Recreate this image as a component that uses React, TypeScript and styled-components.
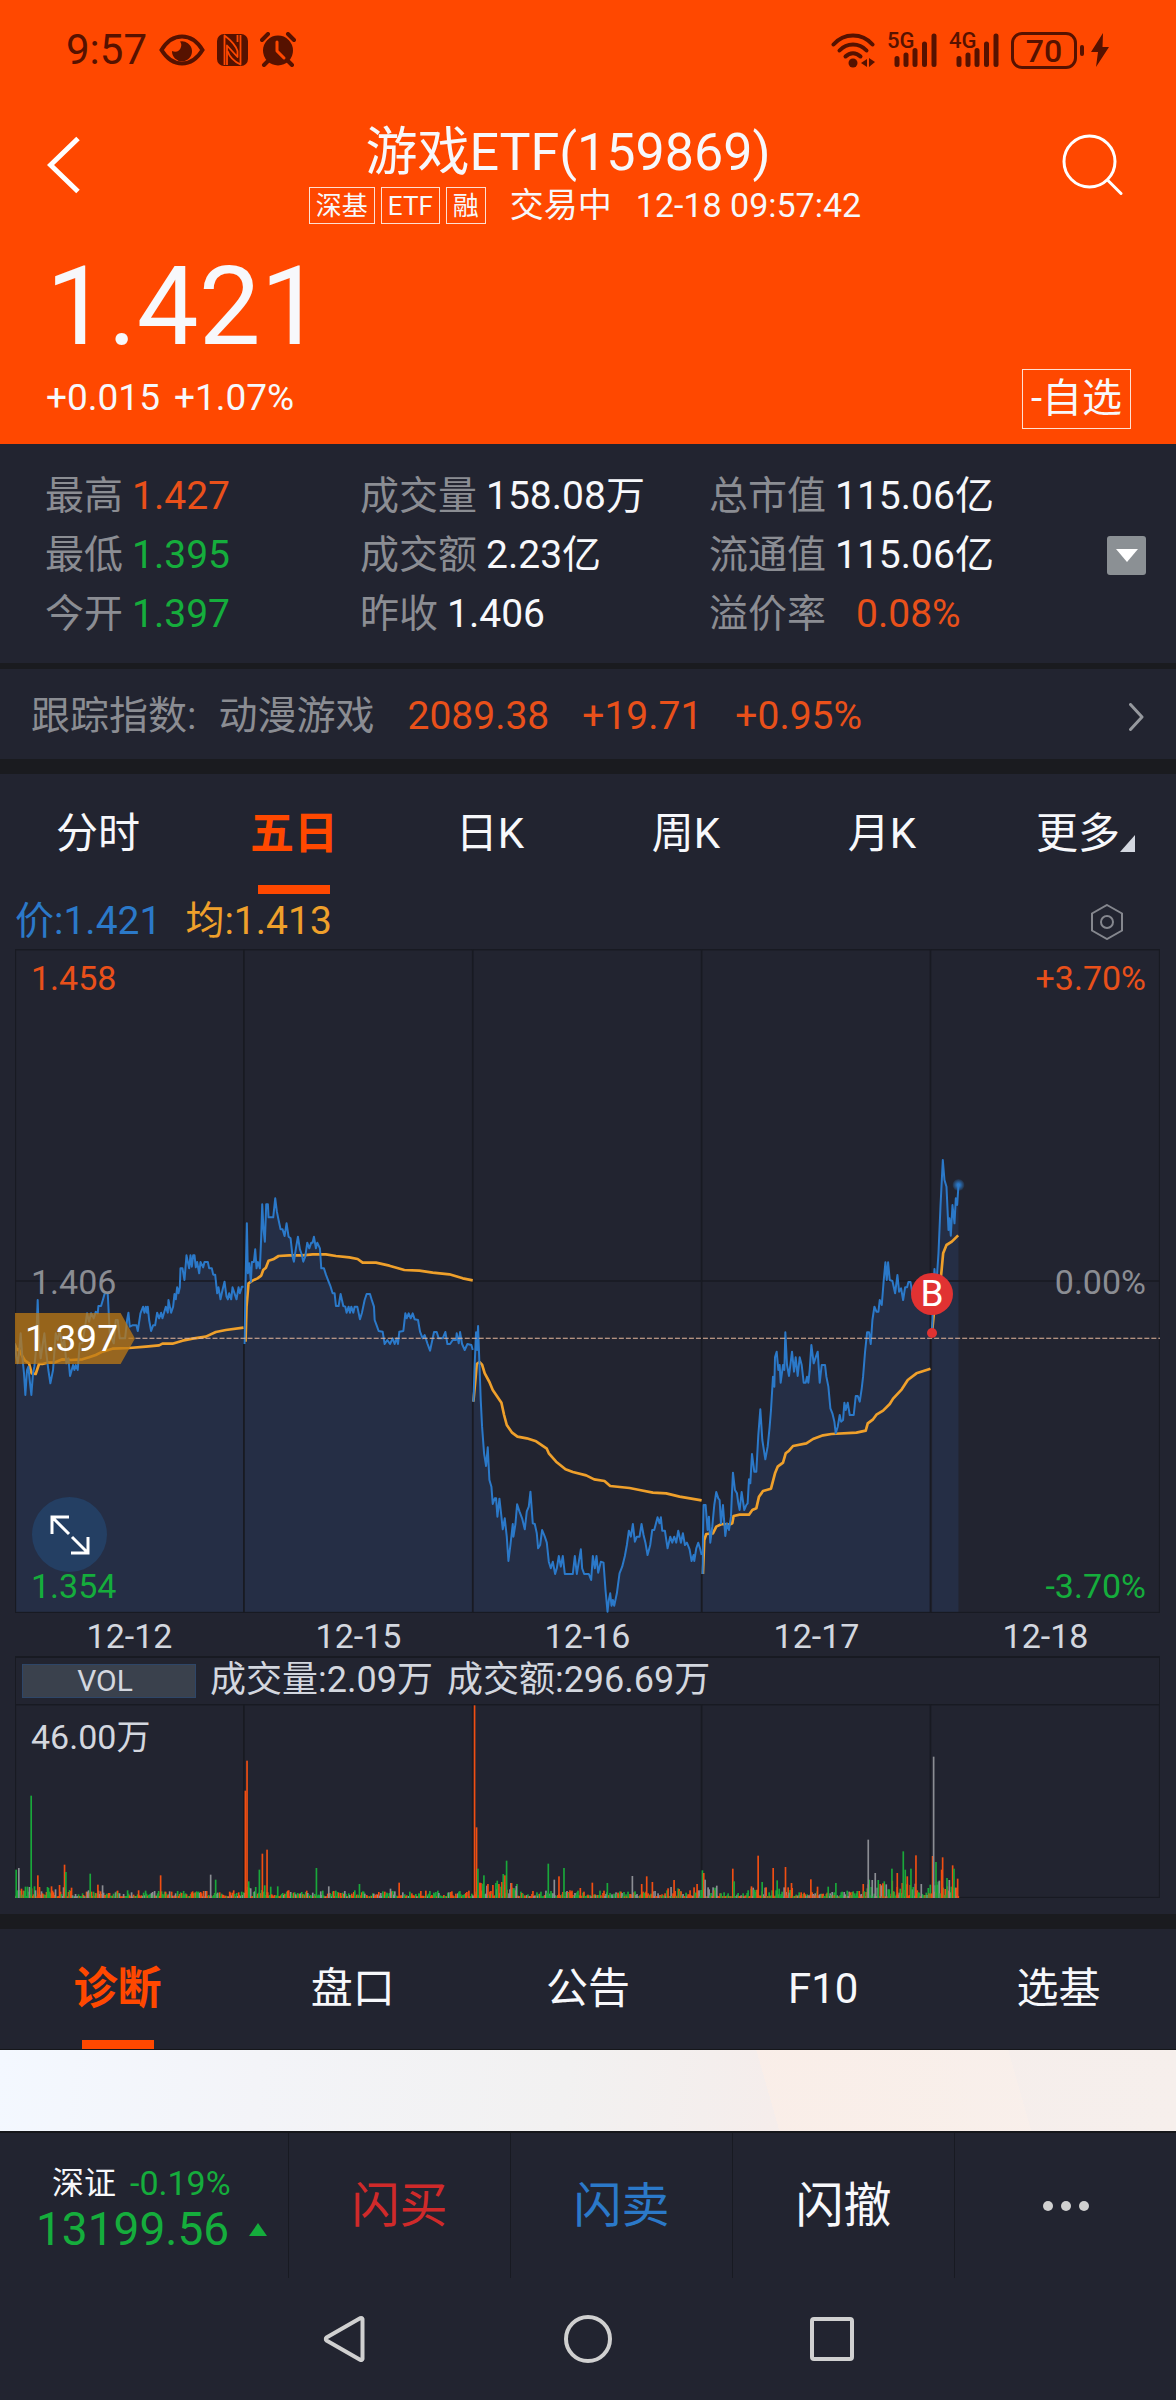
import React from "react";
import styled, { createGlobalStyle } from "styled-components";

const c = {
  brand: "#ff4800",
  panel: "#222430",
  gap: "#1a1b1f",
  grid: "#181a22",
  rise: "#e9501a",
  fall: "#15ad3c",
  muted: "#8b8d93",
  text: "#f7f8fb",
  soft: "#d3d7df",
  price: "#2b79c9",
  avg: "#efa02b",
  statusInk: "#561200",
};

const GlobalStyle = createGlobalStyle`
  * { box-sizing: border-box; }
  body {
    margin: 0;
    background: ${c.panel};
    color: ${c.text};
    font-family: Roboto, "Noto Sans CJK SC", sans-serif;
    font-size: 39px;
    line-height: 1.2;
  }
  button { border: 0; padding: 0; background: none; color: inherit; font: inherit; cursor: pointer; }
  a { color: inherit; text-decoration: none; }
  dl, dt, dd, h1, p { margin: 0; font-weight: 400; }
  svg { display: block; flex: none; }
`;

const Page = styled.div`
  display: flex;
  flex-direction: column;
  min-height: 100vh;
`;

/* ---------- header ---------- */

const Header = styled.header`
  background: ${c.brand};
`;

const StatusBar = styled.div`
  display: flex;
  justify-content: space-between;
  align-items: center;
  height: 100px;
  padding: 0 67px 0 66px;
  color: ${c.statusInk};
`;

const StatusGroup = styled.div`
  display: flex;
  align-items: center;
  gap: 12px;
`;

const Clock = styled.span`
  font-size: 42px;
`;

const SignalBox = styled.span`
  position: relative;
`;

const SignalLabel = styled.span`
  position: absolute;
  left: 0;
  top: -4px;
  font-size: 22px;
  font-weight: 500;
  line-height: 24px;
`;

const BatteryBox = styled.span`
  display: flex;
  align-items: center;
`;

const BatteryLevel = styled.span`
  width: 66px;
  height: 37px;
  border: 3px solid currentColor;
  border-radius: 11px;
  font-size: 32px;
  font-weight: 500;
  line-height: 32px;
  text-align: center;
`;

const BatteryNub = styled.span`
  width: 4px;
  height: 11px;
  margin: 0 7px 0 3px;
  border-radius: 2px;
  background: currentColor;
`;

const TopBar = styled.div`
  display: grid;
  grid-template-columns: 80px 1fr 80px;
  align-items: center;
  height: 129px;
  padding: 0 53px 0 47px;
`;

const IconButton = styled.button<{ $end?: boolean }>`
  display: flex;
  justify-content: ${(p) => (p.$end ? "flex-end" : "flex-start")};
  align-items: center;
  height: 80px;
`;

const TitleBlock = styled.div`
  display: flex;
  flex-direction: column;
  align-items: center;
  padding-top: 22px;
`;

const Title = styled.h1`
  padding-right: 34px;
  font-size: 52px;
  line-height: 60px;
  white-space: nowrap;
`;

const SubLine = styled.div`
  display: flex;
  align-items: center;
  gap: 24px;
  height: 46px;
  font-size: 34px;
  white-space: nowrap;
`;

const Tags = styled.div`
  display: flex;
  gap: 6px;
`;

const Tag = styled.span`
  height: 37px;
  padding: 0 6px;
  border: 1px solid #ffe0d2;
  font-size: 26px;
  line-height: 36px;
`;

const PriceRow = styled.div`
  display: flex;
  justify-content: space-between;
  align-items: flex-end;
  padding: 14px 45px 15px 46px;
`;

const LastPrice = styled.p`
  font-size: 110px;
  line-height: 128px;
`;

const Change = styled.p`
  display: flex;
  gap: 14px;
  height: 58px;
  font-size: 37px;
  line-height: 54px;
`;

const WatchButton = styled.button`
  height: 60px;
  padding: 0 8px;
  border: 1px solid #ffe0d2;
  font-size: 40px;
  line-height: 58px;
`;

/* ---------- quote stats ---------- */

const Stats = styled.section`
  display: flex;
  align-items: center;
  padding: 23px 30px 19px 45px;
`;

const StatGrid = styled.dl`
  flex: 1;
  display: grid;
  grid-template-columns: 315fr 349fr 398fr;
  line-height: 59px;
  white-space: nowrap;
`;

const Stat = styled.div<{ $wide?: boolean }>`
  display: flex;
  gap: ${(p) => (p.$wide ? 30 : 9)}px;
`;

const StatName = styled.dt`
  color: ${c.muted};
`;

const StatValue = styled.dd<{ $color: string }>`
  color: ${(p) => p.$color};
`;

const MoreStats = styled.button`
  display: flex;
  align-items: center;
  justify-content: center;
  width: 39px;
  height: 39px;
  border-radius: 3px;
  background: #8b9094;
`;

const Divider = styled.div<{ $size: number }>`
  height: ${(p) => p.$size}px;
  background: ${c.gap};
`;

const IndexLink = styled.a`
  display: flex;
  align-items: center;
  gap: 33px;
  height: 90px;
  padding: 5px 32px 0 31px;
  color: ${c.rise};
  white-space: nowrap;
`;

const IndexName = styled.span`
  display: flex;
  gap: 22px;
  color: ${c.muted};
`;

const IndexArrow = styled.span`
  margin-left: auto;
`;

/* ---------- tabs ---------- */

const Tabs = styled.nav<{ $count: number }>`
  display: grid;
  grid-template-columns: repeat(${(p) => p.$count}, 1fr);
  height: 120px;
`;

const Tab = styled.button<{ $active?: boolean }>`
  position: relative;
  color: ${(p) => (p.$active ? c.brand : c.text)};
  font-size: ${(p) => (p.$active ? 44 : 42)}px;
  font-weight: ${(p) => (p.$active ? 700 : 400)};
  &::after {
    content: "";
    display: ${(p) => (p.$active ? "block" : "none")};
    position: absolute;
    left: calc(50% - 36px);
    bottom: 0;
    width: 72px;
    height: 9px;
    background: ${c.brand};
  }
`;

const TabText = styled.span`
  position: relative;
`;

const Corner = styled.svg`
  position: absolute;
  left: 100%;
  bottom: 6px;
`;

/* ---------- charts ---------- */

const ChartInfo = styled.div`
  display: flex;
  align-items: center;
  gap: 24px;
  height: 55px;
  padding: 0 53px 0 15px;
`;

const Legend = styled.span<{ $color: string }>`
  color: ${(p) => p.$color};
`;

const Settings = styled.button`
  margin-left: auto;
`;

const Charts = styled.section`
  padding: 0 16px 16px 15px;
`;

const PriceChart = styled.div`
  position: relative;
  height: 664px;
`;

const Plot = styled.svg`
  width: 100%;
  height: 100%;
`;

const AxisLabel = styled.span<{ $color: string; $top: number; $right?: boolean }>`
  position: absolute;
  top: ${(p) => p.$top}px;
  ${(p) => (p.$right ? "right: 14px" : "left: 16px")};
  color: ${(p) => p.$color};
  font-size: 34px;
  line-height: 40px;
`;

const OpenTag = styled.span`
  position: absolute;
  left: 0;
  top: 364px;
  width: 120px;
  height: 51px;
  padding-left: 10px;
  background: rgba(190, 121, 20, 0.75);
  clip-path: polygon(0 0, 88% 0, 100% 50%, 88% 100%, 0 100%);
  color: #fff;
  font-size: 37px;
  line-height: 52px;
`;

const ExpandButton = styled.button`
  position: absolute;
  left: 17px;
  top: 548px;
  display: flex;
  align-items: center;
  justify-content: center;
  width: 75px;
  height: 75px;
  border-radius: 50%;
  background: #243f63;
`;

const BuyMark = styled.span`
  position: absolute;
  left: calc(80% - 20px);
  top: 324px;
  width: 42px;
  height: 42px;
  border-radius: 50%;
  background: #e13232;
  color: #fff;
  font-size: 37px;
  line-height: 42px;
  text-align: center;
  &::after {
    content: "";
    position: absolute;
    left: 16px;
    top: 55px;
    width: 10px;
    height: 10px;
    border-radius: 50%;
    background: #e13232;
  }
`;

const Dates = styled.div`
  display: grid;
  grid-template-columns: repeat(5, 1fr);
  height: 43px;
  color: ${c.soft};
  font-size: 34px;
  line-height: 46px;
  text-align: center;
`;

const VolumeHead = styled.div`
  display: flex;
  align-items: center;
  gap: 14px;
  height: 48px;
  padding: 0 6px;
  border: 2px solid ${c.grid};
  border-width: 2px 1px 0;
  color: ${c.soft};
  font-size: 36px;
  white-space: nowrap;
`;

const VolumeKind = styled.button`
  width: 174px;
  height: 34px;
  padding-right: 8px;
  border: 1px solid #2e4668;
  background: #3a414d;
  font-size: 30px;
  line-height: 32px;
`;

const VolumeChart = styled.div`
  position: relative;
  height: 194px;
`;

/* ---------- bottom ---------- */

const Banner = styled.div`
  flex: 1;
  min-height: 84px;
  border: solid #15161a;
  border-width: 1px 0 2px;
  background:
    linear-gradient(74deg, transparent 65%, rgba(250, 238, 232, 0.9) 65%, rgba(250, 240, 234, 0.6) 86%, transparent 86%),
    linear-gradient(98deg, #f3f8ff 0%, #f3f4f8 22%, #f2f1f1 48%, #f5edeb 66%, #f6efec 100%);
`;

const TradeBar = styled.div`
  display: grid;
  grid-template-columns: 288fr 222fr 222fr 222fr 222fr;
  height: 145px;
`;

const MarketButton = styled.button`
  display: flex;
  flex-direction: column;
  justify-content: center;
  padding: 3px 0 0 36px;
  color: ${c.fall};
`;

const MarketTop = styled.span`
  display: flex;
  gap: 14px;
  padding-left: 16px;
  font-size: 32px;
  line-height: 44px;
`;

const MarketName = styled.span`
  color: ${c.text};
`;

const MarketChange = styled.span`
  font-size: 34px;
`;

const MarketValue = styled.span`
  display: flex;
  align-items: center;
  gap: 20px;
  font-size: 46px;
  line-height: 48px;
`;

const TradeButton = styled.button<{ $color: string }>`
  display: flex;
  align-items: center;
  justify-content: center;
  border-left: 1px solid ${c.grid};
  color: ${(p) => p.$color};
  font-size: 48px;
`;

const SystemNav = styled.nav`
  display: flex;
  justify-content: center;
  gap: 176px;
  height: 122px;
`;

const NavButton = styled.button`
  display: flex;
  align-items: center;
  justify-content: center;
  width: 68px;
`;

/* ---------- data ---------- */

type Session = { shift: [number, number]; price: string; avg: string };

const sessions: Session[] = [
  {
    shift: [-48, 573],
    price:
      "48,610 52,650 56,670 60,640 65,580 70,650 75,700 79,765 84,690 88,680 92,720 97,765 102,700 106,680 110,640 116,480 120,600 125,655 130,620 136,580 142,640 148,690 154,730 162,690 170,580 176,600 182,570 190,620 196,600 202,670 208,655 213,708 218,690 222,675 226,690 230,675 236,690 242,610 250,610 258,560 264,520 270,545 276,520 284,535 290,515 296,520 298,498 306,498 312,478 317,460 326,460 332,580 338,595 344,610 350,540 356,540 362,595 378,595 384,540 388,518 392,560 400,556 412,556 416,573 424,520 432,500 436,518 440,500 444,518 446,500 450,540 456,573 462,556 468,556 474,518 480,535 486,518 490,535 500,500 506,518 508,480 512,500 516,518 522,500 526,462 530,478 534,442 538,460 542,442 544,385 550,385 556,420 562,346 570,385 574,346 578,380 582,346 586,346 590,382 594,366 600,400 604,366 612,382 616,366 626,366 630,385 638,385 642,404 648,404 654,460 658,442 664,478 670,450 676,425 682,470 686,478 690,460 696,478 700,442 706,460 712,478 718,442 722,460 728,440 733,440",
    avg: "48,615 54,630 60,628 68,645 78,662 90,670 98,700 110,702 120,672 130,672 145,668 165,668 190,658 215,660 250,658 270,652 290,645 310,635 340,626 390,624 440,620 480,616 490,611 520,611 550,602 580,596 620,590 650,576 680,570 733,563",
  },
  {
    shift: [-48, 573],
    price:
      "736,612 739,430 743,250 746,400 750,370 755,425 758,366 764,366 768,328 772,385 776,366 782,385 786,290 789,193 793,270 797,305 801,193 806,193 808,232 822,232 828,175 833,215 838,240 844,268 850,268 856,288 862,250 868,290 874,295 880,350 884,365 890,325 896,290 902,328 908,345 912,365 918,350 924,308 930,325 936,308 940,308 944,290 950,325 954,308 962,325 966,385 974,385 980,404 988,425 994,440 1000,460 1006,460 1010,498 1018,498 1024,462 1032,498 1038,500 1042,518 1048,500 1052,518 1056,500 1062,518 1066,500 1074,500 1082,538 1088,518 1096,480 1102,462 1112,462 1118,482 1124,500 1126,540 1132,556 1138,573 1150,575 1156,612 1164,600 1172,612 1180,595 1186,612 1192,595 1196,612 1200,575 1212,573 1218,520 1222,535 1228,520 1234,535 1240,520 1246,538 1256,540 1262,575 1270,595 1276,585 1284,610 1292,632 1300,595 1304,576 1312,576 1318,595 1324,595 1330,595 1338,576 1344,612 1352,612 1360,600 1370,600 1372,580 1378,610 1382,576 1388,612 1396,630 1404,612 1416,615 1420,630",
    avg: "739,605 742,500 748,430 760,422 775,415 786,407 792,390 800,383 808,362 822,358 838,348 870,346 910,346 940,343 980,343 1010,348 1050,352 1075,357 1090,368 1130,368 1170,377 1215,390 1260,392 1300,398 1350,403 1390,415 1420,421",
  },
  {
    shift: [1272, 1053],
    price:
      "102,305 106,190 110,97 113,150 116,78 120,190 124,300 128,380 134,460 140,498 145,442 150,540 156,560 160,612 166,595 170,595 174,650 180,596 186,650 190,688 196,655 202,710 207,783 213,735 220,672 222,710 228,672 233,613 240,634 248,655 256,688 262,634 268,620 273,575 280,670 286,672 292,700 296,745 302,735 308,690 316,710 322,728 328,785 334,805 340,785 347,822 352,805 358,768 364,800 370,768 376,822 400,822 406,768 412,822 418,785 424,748 428,805 434,822 448,822 455,840 460,768 466,805 471,768 476,818 484,785 492,788 498,870 504,935 508,900 512,880 516,917 520,900 524,917 532,880 540,820 548,800 556,768 562,735 568,692 574,710 580,672 586,725 592,710 600,710 606,672 612,705 618,730 624,765 632,735 638,690 644,690 654,652 660,670 664,652 668,692 676,692 684,745 692,710 698,728 704,710 710,728 716,692 724,728 730,700 736,735 742,728 750,748 756,783 762,765 764,783 770,745 776,728 782,748 786,765",
    avg: "102,305 108,240 112,192 120,186 128,194 136,220 150,246 160,270 186,308 194,345 202,375 218,398 234,410 262,415 290,424 322,446 328,460 350,485 378,508 400,516 440,526 464,538 495,543 512,558 570,564 600,570 640,578 680,580 720,590 786,601",
  },
  {
    shift: [2052, 513],
    price:
      "9,1362 10,1250 12,1155 18,1155 24,1230 28,1190 32,1268 38,1220 44,1155 50,1116 56,1135 60,1140 64,1210 70,1155 77,1248 82,1210 88,1230 94,1190 97,1120 100,1058 106,1110 112,1120 116,1150 120,1170 126,1116 134,1170 140,1155 144,1150 148,1078 152,1090 157,1002 164,1055 170,1055 176,945 182,868 188,960 197,1018 204,980 210,920 214,870 220,770 224,800 226,712 231,695 236,750 240,735 243,788 250,735 254,750 257,637 262,735 268,768 277,695 283,755 288,712 294,768 300,712 306,735 312,788 318,788 322,770 326,788 330,750 335,675 342,730 347,715 354,695 360,788 366,735 376,735 380,770 386,800 392,865 398,880 404,905 408,940 414,920 420,885 424,905 430,900 434,848 438,870 444,848 450,885 462,885 468,828 474,828 480,845 486,805 490,770 496,695 502,637 508,637 513,672 518,600 524,560 530,575 536,575 540,540 546,555 552,480 557,427 561,480 565,427 570,480 578,483 586,520 593,465 598,515 604,505 610,540 616,502 622,502 626,486 632,486 638,520 660,500 692,520",
    avg: "10,1362 14,1260 20,1242 40,1240 50,1220 66,1212 90,1214 98,1210 102,1188 120,1184 148,1184 158,1170 170,1165 178,1130 190,1113 214,1106 226,1060 234,1040 250,1028 258,1000 268,992 280,978 320,970 340,957 370,946 395,942 470,938 498,932 504,910 520,898 530,884 550,872 570,852 580,836 606,808 624,780 650,760 692,746",
  },
  {
    shift: [2052, 513],
    price:
      "697,635 700,520 704,447 708,500 712,460 716,400 722,260 729,120 734,180 740,200 746,330 749,295 753,347 758,255 764,310 768,235 772,255 776,195",
    avg: "697,635 706,540 716,500 724,465 730,400 740,375 756,365 775,346",
  },
];

const PLOT_W = 3432;
const PLOT_H = 1992;
const VOL_H = 582;
const dayLines = [686, 1372, 2058, 2744];

const toPoints = (raw: string, [dx, dy]: [number, number]) =>
  raw.split(" ").map((pair) => {
    const [x, y] = pair.split(",").map(Number);
    return [x + dx, y + dy];
  });

const join = (pts: number[][]) => pts.map((p) => p.join(",")).join(" ");

const areaOf = (pts: number[][]) =>
  `${pts[0][0]},${PLOT_H} ${join(pts)} ${pts[pts.length - 1][0]},${PLOT_H}`;

const volColors: Record<string, string> = { r: "#f04e12", g: "#19a83a", n: "#8b8d93" };

const peaks: [number, number, string][] = [
  [3, 85, "g"], [11, 90, "n"], [48, 307, "g"], [68, 68, "r"], [148, 100, "r"], [152, 78, "g"], [225, 73, "g"],
  [248, 40, "r"], [262, 38, "n"], [436, 68, "r"], [586, 70, "n"], [601, 55, "g"], [690, 322, "r"], [695, 412, "r"],
  [700, 50, "g"], [732, 85, "g"], [741, 133, "r"], [755, 145, "r"], [787, 35, "g"], [903, 90, "g"], [940, 35, "n"],
  [1032, 42, "g"], [1125, 28, "n"], [1151, 46, "r"], [1377, 578, "r"], [1383, 212, "r"], [1387, 88, "g"],
  [1405, 68, "g"], [1445, 52, "g"], [1463, 72, "g"], [1468, 68, "r"], [1473, 112, "g"], [1488, 45, "r"],
  [1502, 36, "n"], [1598, 103, "g"], [1616, 55, "n"], [1630, 65, "r"], [1645, 90, "g"], [1694, 30, "r"],
  [1730, 46, "r"], [1775, 45, "g"], [1850, 66, "n"], [1878, 42, "r"], [1893, 65, "r"], [1910, 48, "r"],
  [1975, 54, "r"], [2044, 42, "r"], [2060, 83, "g"], [2064, 75, "r"], [2068, 55, "n"], [2103, 37, "n"],
  [2151, 88, "r"], [2155, 50, "g"], [2207, 35, "r"], [2227, 127, "r"], [2239, 48, "g"], [2272, 90, "r"],
  [2284, 53, "g"], [2309, 93, "r"], [2327, 45, "r"], [2385, 56, "r"], [2405, 34, "r"], [2437, 34, "g"],
  [2460, 45, "g"], [2557, 175, "n"], [2578, 75, "n"], [2601, 44, "r"], [2628, 88, "g"], [2644, 75, "r"],
  [2662, 140, "g"], [2668, 85, "g"], [2674, 65, "r"], [2685, 88, "g"], [2700, 128, "r"], [2716, 42, "n"],
  [2750, 126, "r"], [2753, 424, "n"], [2760, 108, "g"], [2777, 85, "r"], [2780, 122, "r"], [2793, 60, "g"],
  [2810, 98, "r"], [2814, 88, "g"], [2825, 58, "r"],
];

/* Quiet minutes between the peaks: small bars, busier near each open. */
const quiet: [number, number, string][] = (() => {
  let seed = 7;
  const rnd = () => {
    seed = (seed * 16807) % 2147483647;
    return seed / 2147483647;
  };
  const busy = (x: number) => {
    if (x < 170) return 34;
    if (x > 690 && x < 770) return 38;
    if (x > 1380 && x < 1510) return 48;
    if (x > 1950 && x < 2110) return 28;
    if (x > 2190 && x < 2330) return 28;
    if (x > 2540) return 50;
    return 18;
  };
  const out: [number, number, string][] = [];
  for (let x = 1; x < 2828; x += 3) {
    const k = rnd();
    const hue = rnd();
    out.push([x, 5 + Math.round(k * k * busy(x)), hue < 0.42 ? "r" : hue < 0.82 ? "g" : "n"]);
  }
  return out;
})();

const stats: { name: string; value: string; color: string; wide?: boolean }[] = [
  { name: "最高", value: "1.427", color: c.rise },
  { name: "成交量", value: "158.08万", color: c.text },
  { name: "总市值", value: "115.06亿", color: c.text },
  { name: "最低", value: "1.395", color: c.fall },
  { name: "成交额", value: "2.23亿", color: c.text },
  { name: "流通值", value: "115.06亿", color: c.text },
  { name: "今开", value: "1.397", color: c.fall },
  { name: "昨收", value: "1.406", color: c.text },
  { name: "溢价率", value: "0.08%", color: c.rise, wide: true },
];

/* ---------- icons ---------- */

const EyeIcon = () => (
  <svg width="46" height="32" viewBox="0 0 46 32">
    <path d="M2.500 16C8 7 15 2.500 23 2.500S38 7 43.500 16C38 25 31 29.500 23 29.500S8 25 2.500 16Z" fill="none" stroke={c.statusInk} strokeWidth="4" />
    <path d="M21 7.500a10 10 0 1 1-8 9.500c4 2 8 0 9-4 .6-2.200.3-4-1-5.500Z" fill={c.statusInk} />
  </svg>
);

const NfcIcon = () => (
  <svg width="31" height="32" viewBox="0 0 31 32">
    <rect width="31" height="32" rx="7" fill={c.statusInk} />
    <path d="M7.500 31V1.500C12 5 18 9 20.500 17V23L10 11.500V31" fill="none" stroke={c.brand} strokeWidth="1.800" strokeLinejoin="round" />
    <path d="M23.500 1V30.500C18 28 13 24 10.500 17M20.500 1V8" fill="none" stroke={c.brand} strokeWidth="1.800" strokeLinejoin="round" />
  </svg>
);

const AlarmIcon = () => (
  <svg width="36" height="35" viewBox="0 0 36 35">
    <circle cx="18" cy="18.500" r="15" fill={c.statusInk} />
    <path d="M2 8l6-6M34 8l-6-6M8 29l-4 4M28 29l4 4" stroke={c.statusInk} strokeWidth="4" strokeLinecap="round" />
    <path d="M17 10v9l7 7" fill="none" stroke={c.brand} strokeWidth="3" strokeLinecap="round" strokeLinejoin="round" />
  </svg>
);

const WifiIcon = () => (
  <svg width="44" height="35" viewBox="0 0 44 35">
    <g fill="none" stroke={c.statusInk} strokeWidth="4" strokeLinecap="round">
      <path d="M2.500 11.500C13-.5 31-.5 41.500 11.500" />
      <path d="M8.500 17.500c7.500-8 19.500-8 27 0" />
      <path d="M14.500 23.500c4.500-4.500 10.500-4.500 15 0" />
    </g>
    <circle cx="22" cy="30" r="4.500" fill={c.statusInk} />
    <path d="M36 26v8l-6-4ZM38 25v9l6-5Z" fill={c.statusInk} />
  </svg>
);

const Signal = ({ label }: { label: string }) => (
  <SignalBox>
    <SignalLabel>{label}</SignalLabel>
    <svg width="50" height="34" viewBox="0 0 50 34">
      <path d="M10 25.500v6M19 22v9.500M28 17.500v14M37.500 11v20.500M47 3v28.500" stroke={c.statusInk} strokeWidth="5" strokeLinecap="round" />
    </svg>
  </SignalBox>
);

const BoltIcon = () => (
  <svg width="18" height="34" viewBox="0 0 18 34">
    <path d="M12 0L0 19h7L5 34 18 14h-6.500Z" fill={c.statusInk} />
  </svg>
);

const lineTabs = ["分时", "五日", "日K", "周K", "月K", "更多"];
const infoTabs = ["诊断", "盘口", "公告", "F10", "选基"];
const dates = ["12-12", "12-15", "12-16", "12-17", "12-18"];

export default function App() {
  return (
    <>
      <GlobalStyle />
      <Page>
        <Header>
          <StatusBar>
            <StatusGroup>
              <Clock>9:57</Clock>
              <EyeIcon />
              <NfcIcon />
              <AlarmIcon />
            </StatusGroup>
            <StatusGroup>
              <WifiIcon />
              <Signal label="5G" />
              <Signal label="4G" />
              <BatteryBox>
                <BatteryLevel>70</BatteryLevel>
                <BatteryNub />
                <BoltIcon />
              </BatteryBox>
            </StatusGroup>
          </StatusBar>

          <TopBar>
            <IconButton aria-label="返回">
              <svg width="34" height="58" viewBox="0 0 34 58">
                <path d="M31 2.500L3.500 29 31 55.500" fill="none" stroke="#fff" strokeWidth="5" />
              </svg>
            </IconButton>
            <TitleBlock>
              <Title>游戏ETF(159869)</Title>
              <SubLine>
                <Tags>
                  <Tag>深基</Tag>
                  <Tag>ETF</Tag>
                  <Tag>融</Tag>
                </Tags>
                <span>交易中</span>
                <time>12-18 09:57:42</time>
              </SubLine>
            </TitleBlock>
            <IconButton $end aria-label="搜索">
              <svg width="61" height="61" viewBox="0 0 61 61">
                <circle cx="27.500" cy="27.500" r="25.500" fill="none" stroke="#fff" strokeWidth="3" />
                <path d="M45.500 46L59 59.500" stroke="#fff" strokeWidth="3" strokeLinecap="round" />
              </svg>
            </IconButton>
          </TopBar>

          <PriceRow>
            <div>
              <LastPrice>1.421</LastPrice>
              <Change>
                <span>+0.015</span>
                <span>+1.07%</span>
              </Change>
            </div>
            <WatchButton>-自选</WatchButton>
          </PriceRow>
        </Header>

        <Stats>
          <StatGrid>
            {stats.map((s) => (
              <Stat key={s.name} $wide={s.wide}>
                <StatName>{s.name}</StatName>
                <StatValue $color={s.color}>{s.value}</StatValue>
              </Stat>
            ))}
          </StatGrid>
          <MoreStats aria-label="展开">
            <svg width="22" height="13" viewBox="0 0 22 13">
              <path d="M0 0h22L11 13Z" fill="#fff" />
            </svg>
          </MoreStats>
        </Stats>
        <Divider $size={6} />
        <IndexLink href="#index">
          <IndexName>
            <span>跟踪指数:</span>
            <span>动漫游戏</span>
          </IndexName>
          <span>2089.38</span>
          <span>+19.71</span>
          <span>+0.95%</span>
          <IndexArrow>
            <svg width="15" height="28" viewBox="0 0 15 28">
              <path d="M1.500 1.500L13 14 1.500 26.500" fill="none" stroke="#96999e" strokeWidth="3" strokeLinecap="round" strokeLinejoin="round" />
            </svg>
          </IndexArrow>
        </IndexLink>
        <Divider $size={15} />

        <Tabs $count={6}>
          {lineTabs.map((t) => (
            <Tab key={t} $active={t === "五日"}>
              <TabText>
                {t}
                {t === "更多" && (
                  <Corner width="15" height="17" viewBox="0 0 15 17">
                    <path d="M15 0v17H0Z" fill="#d3d7df" />
                  </Corner>
                )}
              </TabText>
            </Tab>
          ))}
        </Tabs>

        <ChartInfo>
          <Legend $color={c.price}>价:1.421</Legend>
          <Legend $color={c.avg}>均:1.413</Legend>
          <Settings aria-label="设置">
            <svg width="32" height="36" viewBox="0 0 32 36">
              <path d="M16 1L31 9.500v17L16 35 1 26.500v-17Z" fill="none" stroke="#85878e" strokeWidth="2" />
              <circle cx="16" cy="18" r="6" fill="none" stroke="#85878e" strokeWidth="2" />
            </svg>
          </Settings>
        </ChartInfo>

        <Charts>
          <PriceChart>
            <Plot viewBox={`0 0 ${PLOT_W} ${PLOT_H}`} preserveAspectRatio="none">
              <defs>
                <radialGradient id="glow">
                  <stop offset="20%" stopColor={c.price} />
                  <stop offset="100%" stopColor={c.price} stopOpacity="0.1" />
                </radialGradient>
              </defs>
              {sessions.map((s, i) => (
                <polygon key={i} points={areaOf(toPoints(s.price, s.shift))} fill="#252e45" />
              ))}
              <g stroke={c.grid} strokeWidth="5" fill="none">
                <rect x="1" y="2" width={PLOT_W - 2} height={PLOT_H - 3} />
                <path d={`M0 996H${PLOT_W}`} />
                {dayLines.map((x) => (
                  <path key={x} d={`M${x} 0V${PLOT_H}`} />
                ))}
              </g>
              <g fill="none" strokeLinejoin="round">
                {sessions.map((s, i) => (
                  <g key={i}>
                    <polyline points={join(toPoints(s.avg, s.shift))} stroke={c.avg} strokeWidth="8" />
                    <polyline points={join(toPoints(s.price, s.shift))} stroke={c.price} strokeWidth="6" />
                  </g>
                ))}
              </g>
              <path d={`M340 1168H${PLOT_W}`} stroke="#e6b79a" strokeWidth="3" strokeDasharray="15 6" />
              <circle cx="2828" cy="708" r="18" fill="url(#glow)" />
            </Plot>
            <AxisLabel $color={c.rise} $top={9}>1.458</AxisLabel>
            <AxisLabel $color={c.rise} $top={9} $right>+3.70%</AxisLabel>
            <AxisLabel $color={c.muted} $top={313}>1.406</AxisLabel>
            <AxisLabel $color={c.muted} $top={313} $right>0.00%</AxisLabel>
            <AxisLabel $color={c.fall} $top={617}>1.354</AxisLabel>
            <AxisLabel $color={c.fall} $top={617} $right>-3.70%</AxisLabel>
            <OpenTag>1.397</OpenTag>
            <ExpandButton aria-label="全屏">
              <svg width="40" height="40" viewBox="0 0 40 40">
                <path d="M19 2H2v17M2 2l17 17M38 22v16H21M38 38L22 22" fill="none" stroke="#fff" strokeWidth="3" />
              </svg>
            </ExpandButton>
            <BuyMark>B</BuyMark>
          </PriceChart>

          <Dates>
            {dates.map((d) => (
              <span key={d}>{d}</span>
            ))}
          </Dates>

          <VolumeHead>
            <VolumeKind>VOL</VolumeKind>
            <span>成交量:2.09万</span>
            <span>成交额:296.69万</span>
          </VolumeHead>
          <VolumeChart>
            <Plot viewBox={`0 0 ${PLOT_W} ${VOL_H}`} preserveAspectRatio="none">
              <g stroke={c.grid} strokeWidth="5" fill="none">
                <rect x="1" y="2" width={PLOT_W - 2} height={VOL_H - 3} />
                {dayLines.map((x) => (
                  <path key={x} d={`M${x} 0V${VOL_H}`} />
                ))}
              </g>
              {[...quiet, ...peaks].map(([x, h, k], i) => (
                <rect key={i} x={x - 2} y={VOL_H - h} width="5" height={h} fill={volColors[k]} />
              ))}
            </Plot>
            <AxisLabel $color={c.soft} $top={13}>46.00万</AxisLabel>
          </VolumeChart>
        </Charts>
        <Divider $size={15} />

        <Tabs $count={5}>
          {infoTabs.map((t) => (
            <Tab key={t} $active={t === "诊断"}>
              {t}
            </Tab>
          ))}
        </Tabs>
        <Banner />

        <TradeBar>
          <MarketButton>
            <MarketTop>
              <MarketName>深证</MarketName>
              <MarketChange>-0.19%</MarketChange>
            </MarketTop>
            <MarketValue>
              13199.56
              <svg width="18" height="13" viewBox="0 0 18 13">
                <path d="M9 0l9 13H0Z" fill={c.fall} />
              </svg>
            </MarketValue>
          </MarketButton>
          <TradeButton $color="#d02a2a">闪买</TradeButton>
          <TradeButton $color={c.price}>闪卖</TradeButton>
          <TradeButton $color={c.text}>闪撤</TradeButton>
          <TradeButton $color="#d0d0d0" aria-label="更多">
            <svg width="46" height="10" viewBox="0 0 46 10" fill="currentColor">
              <circle cx="5" cy="5" r="5" />
              <circle cx="23" cy="5" r="5" />
              <circle cx="41" cy="5" r="5" />
            </svg>
          </TradeButton>
        </TradeBar>

        <SystemNav>
          <NavButton aria-label="后退">
            <svg width="42" height="48" viewBox="0 0 42 48">
              <path d="M39.500 4v40a1.500 1.500 0 0 1-2 1L3.500 25.500a2 2 0 0 1 0-3L37.500 3a1.500 1.500 0 0 1 2 1Z" fill="none" stroke="#d0d0d0" strokeWidth="4" strokeLinejoin="round" />
            </svg>
          </NavButton>
          <NavButton aria-label="主页">
            <svg width="48" height="48" viewBox="0 0 48 48">
              <circle cx="24" cy="24" r="22" fill="none" stroke="#d0d0d0" strokeWidth="4" />
            </svg>
          </NavButton>
          <NavButton aria-label="最近任务">
            <svg width="44" height="44" viewBox="0 0 44 44">
              <rect x="2" y="2" width="40" height="40" rx="2" fill="none" stroke="#d0d0d0" strokeWidth="4" />
            </svg>
          </NavButton>
        </SystemNav>
      </Page>
    </>
  );
}
